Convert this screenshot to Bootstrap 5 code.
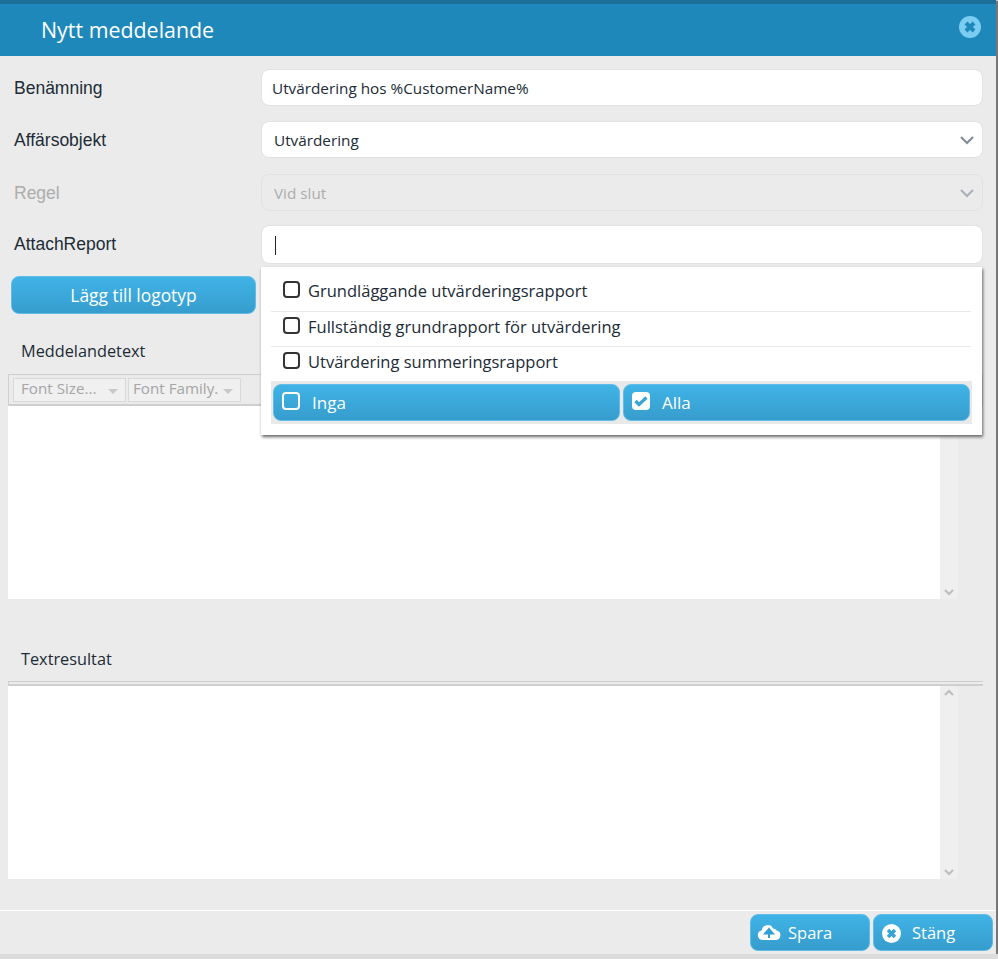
<!DOCTYPE html>
<html lang="sv">

<head>
  <meta charset="UTF-8" />
  <title>Nytt meddelande</title>
  <meta name="viewport" content="width=device-width, initial-scale=1" />
  <link href="https://cdn.jsdelivr.net/npm/bootstrap@5.3.0/dist/css/bootstrap.min.css" rel="stylesheet" />

  <style>
    body {
      background-color: #dcdcdc;
      font-family: "Open Sans", sans-serif;
      color: #212b36;
    }

    .dialog-window {
      width: 996px;
      height: 954px;
      background-color: #ebebeb;
      box-shadow: 2px 1px 1px #777;
    }

    .dialog-head {
      height: 56px;
      border-top: 4px solid #1c6f99;
      background-color: #1e88bb;
      padding: 0 15px 0 41px;
    }

    .dialog-title {
      font-family: "Open Sans", sans-serif;
      font-size: 21.4px;
      font-weight: 400;
      margin: 0;
      color: #fff;
    }

    .head-close {
      margin-bottom: 6px;
    }

    .form-area {
      height: 854px;
      padding: 13px 13px 0 0;
    }

    .form-line {
      margin-bottom: 15px;
    }

    .form-line label {
      width: 261px;
      padding-left: 14px;
      margin-top: 2px;
      font-family: "Liberation Sans", sans-serif;
      font-size: 17.5px;
    }

    .form-line .form-control,
    .form-line .form-select {
      height: 37px;
      border: 1px solid #e2e2e2;
      border-radius: 8px;
      font-size: 15.3px;
      color: #212b36;
      padding: 1px 10px 0 10px;
      box-shadow: none;
    }

    .form-line .form-select {
      padding: 2px 30px 0 12px;
      background-size: 16px 10px;
      background-position: right 7px center;
      background-image: url("data:image/svg+xml,%3csvg xmlns='http://www.w3.org/2000/svg' viewBox='0 0 16 10'%3e%3cpath fill='none' stroke='%23808a94' stroke-width='2' d='M2 2l6 6 6-6'/%3e%3c/svg%3e");
    }

    .form-line .form-select:disabled {
      background-color: #ebebeb;
      background-image: url("data:image/svg+xml,%3csvg xmlns='http://www.w3.org/2000/svg' viewBox='0 0 16 10'%3e%3cpath fill='none' stroke='%23a9b0b7' stroke-width='2' d='M2 2l6 6 6-6'/%3e%3c/svg%3e");
      color: #adadad;
      opacity: 1;
    }

    .form-line.is-disabled label {
      color: #adadad;
    }

    .form-line.line-wide {
      margin-bottom: 16px;
    }

    .form-line.line-rule {
      margin-bottom: 14px;
    }

    .form-line.line-attach {
      margin-bottom: 12px;
    }

    .form-line.line-attach label {
      margin-top: 0;
      margin-bottom: 1px;
    }

    .form-line .attach-field {
      height: 39px;
      padding-top: 10px;
    }

    .text-caret {
      display: block;
      width: 1px;
      height: 19px;
      background-color: #222;
      margin-left: 3px;
    }

    .btn-sky {
      background: linear-gradient(#40b3e6, #369dcd);
      border: 1px solid #62bde6;
      border-radius: 8px;
      color: #fff;
      font-family: "Open Sans", sans-serif;
    }

    .btn-sky:hover {
      color: #fff;
    }

    .btn-logo {
      width: 245px;
      height: 38px;
      margin-left: 11px;
      padding: 0;
      font-size: 17.4px;
    }

    .section-name {
      margin: 0 0 0 21px;
      font-size: 16.3px;
      line-height: 22px;
    }

    .name-first {
      margin-top: 26px;
    }

    .name-second {
      margin-top: 49px;
    }

    .editor-box {
      margin-left: 8px;
    }

    .editor-tools {
      height: 32px;
      margin-top: 12px;
      border: 1px solid #cfcfcf;
      border-bottom-width: 2px;
      padding: 3px 4px;
      gap: 2px;
      background-color: #ebebeb;
    }

    .tools-empty {
      height: 5px;
      padding: 0;
      margin-top: 11px;
      border-width: 1px 0 2px 1px;
    }

    .tool-pick {
      width: 113px;
      height: 24px;
      border: 1px solid #d9d9d9;
      background-color: #f0f0f0;
      color: #a5a5a5;
      font-size: 15.2px;
      line-height: 18px;
      padding-left: 7px;
      white-space: nowrap;
    }

    .tool-pick + .tool-pick {
      padding-left: 4px;
    }

    .tool-pick::after {
      content: "";
      position: absolute;
      right: 7px;
      top: 10px;
      border: 5px solid transparent;
      border-top: 5px solid #c8c8c8;
    }

    .editor-body {
      width: 950px;
      height: 193px;
      background-color: #fff;
    }

    .editor-bar {
      width: 18px;
      height: 100%;
      margin-left: auto;
      background-color: #efefef;
      padding: 3px 0;
    }

    .dialog-foot {
      height: 44px;
      border-top: 1px solid #fff;
      padding: 3px 3px 0 0;
      gap: 3px;
    }

    .btn-foot {
      width: 120px;
      height: 37px;
      padding: 2px 0 0 6px;
      gap: 7px;
      font-size: 16.5px;
    }

    .btn-foot.foot-close {
      padding-left: 8px;
      gap: 11px;
    }

    .foot-cloud {
      margin-bottom: 4px;
    }

    .report-menu {
      position: absolute;
      left: 261px;
      top: 267px;
      width: 721px;
      height: 168px;
      padding: 8px 10px 0;
      background-color: #fff;
      box-shadow: 1px 2px 3px #666;
      z-index: 5;
    }

    .report-item {
      height: 35px;
      border-bottom: 1px solid #e9e9e9;
      padding: 0 0 3px 12px;
      gap: 8px;
      font-size: 16.5px;
      color: #212b36;
      margin-right: 1px;
    }

    .report-item:first-child {
      height: 37px;
    }

    .report-item:nth-child(3) {
      height: 34px;
      border-bottom: 0;
    }

    .report-item .form-check-input,
    .menu-actions .form-check-input {
      width: 17px;
      height: 17px;
      margin: 0 0 4px;
      border: 2px solid #333;
      border-radius: 4px;
      flex-shrink: 0;
    }

    .menu-actions {
      height: 43px;
      padding: 3px 2px 0;
      gap: 3px;
      background-color: #e9e9e9;
    }

    .menu-actions .btn-sky {
      flex: 1 1 0;
      height: 37px;
      padding: 0 0 0 8px;
      gap: 12px;
      font-size: 17px;
    }

    .menu-actions .form-check-input {
      width: 18px;
      height: 18px;
      border-color: #fff;
      background-color: transparent;
    }

    .menu-actions .form-check-input:checked {
      border: 0;
      background-color: #fff;
      background-size: 18px 18px;
      background-image: url("data:image/svg+xml,%3csvg xmlns='http://www.w3.org/2000/svg' viewBox='0 0 18 18'%3e%3cpath fill='none' stroke='%2339a5d8' stroke-width='3.4' d='M3.5 9l3.5 3.5 7.5-7'/%3e%3c/svg%3e");
    }
  </style>
</head>

<body class="m-0">

  <div class="dialog-window position-relative">
    <header class="dialog-head d-flex align-items-center justify-content-between">
      <h1 class="dialog-title">Nytt meddelande</h1>
      <svg class="head-close" width="22" height="22" viewBox="0 0 22 22">
        <circle cx="11" cy="11" r="11" fill="#7accf0" />
        <path d="M7 7l8 8M15 7l-8 8" stroke="#1e88bb" stroke-width="4" />
      </svg>
    </header>

    <main class="form-area">
      <div class="form-line d-flex align-items-center">
        <label>Benämning</label>
        <input class="form-control flex-grow-1 w-auto" value="Utvärdering hos %CustomerName%" />
      </div>
      <div class="form-line line-wide d-flex align-items-center">
        <label>Affärsobjekt</label>
        <select class="form-select flex-grow-1 w-auto">
          <option>Utvärdering</option>
        </select>
      </div>
      <div class="form-line line-rule is-disabled d-flex align-items-center">
        <label>Regel</label>
        <select class="form-select flex-grow-1 w-auto" disabled>
          <option>Vid slut</option>
        </select>
      </div>
      <div class="form-line line-attach d-flex align-items-center">
        <label>AttachReport</label>
        <div class="form-control attach-field flex-grow-1 w-auto"><span class="text-caret"></span></div>
      </div>

      <button class="btn btn-sky btn-logo d-block" type="button">Lägg till logotyp</button>

      <p class="section-name name-first">Meddelandetext</p>
      <div class="editor-box">
        <div class="editor-tools d-flex">
          <div class="tool-pick position-relative">Font Size...</div>
          <div class="tool-pick position-relative">Font Family.</div>
        </div>
        <div class="editor-body">
          <div class="editor-bar d-flex flex-column align-items-center justify-content-between">
            <svg width="10" height="7" viewBox="0 0 10 7">
              <path d="M1 6l4-4 4 4" fill="none" stroke="#bdbdbd" stroke-width="2" />
            </svg>
            <svg width="10" height="7" viewBox="0 0 10 7">
              <path d="M1 1l4 4 4-4" fill="none" stroke="#bdbdbd" stroke-width="2" />
            </svg>
          </div>
        </div>
      </div>

      <p class="section-name name-second">Textresultat</p>
      <div class="editor-box">
        <div class="editor-tools tools-empty"></div>
        <div class="editor-body">
          <div class="editor-bar d-flex flex-column align-items-center justify-content-between">
            <svg width="10" height="7" viewBox="0 0 10 7">
              <path d="M1 6l4-4 4 4" fill="none" stroke="#bdbdbd" stroke-width="2" />
            </svg>
            <svg width="10" height="7" viewBox="0 0 10 7">
              <path d="M1 1l4 4 4-4" fill="none" stroke="#bdbdbd" stroke-width="2" />
            </svg>
          </div>
        </div>
      </div>
    </main>

    <footer class="dialog-foot d-flex justify-content-end">
      <button class="btn btn-sky btn-foot d-flex align-items-center" type="button">
        <svg class="foot-cloud" width="24" height="18" viewBox="0 0 24 18">
          <path d="M5.5 17a4.8 4.8 0 0 1-.8-9.5 6 6 0 0 1 11.4-2 5 5 0 0 1 3.7 1.9 4.9 4.9 0 0 1-.8 9.6z" fill="#fff" />
          <path d="M12 15V9M8.2 10.4L12 6l3.8 4.4z" fill="#2f9fd4" stroke="#2f9fd4" stroke-width="2" />
        </svg>
        Spara
      </button>
      <button class="btn btn-sky btn-foot foot-close d-flex align-items-center" type="button">
        <svg width="19" height="19" viewBox="0 0 22 22">
          <circle cx="11" cy="11" r="11" fill="#fff" />
          <path d="M7 7l8 8M15 7l-8 8" stroke="#38a3d6" stroke-width="4" />
        </svg>
        Stäng
      </button>
    </footer>

    <div class="report-menu">
      <div class="list-group list-group-flush">
        <label class="report-item d-flex align-items-center">
          <input class="form-check-input" type="checkbox" />Grundläggande utvärderingsrapport
        </label>
        <label class="report-item d-flex align-items-center">
          <input class="form-check-input" type="checkbox" />Fullständig grundrapport för utvärdering
        </label>
        <label class="report-item d-flex align-items-center">
          <input class="form-check-input" type="checkbox" />Utvärdering summeringsrapport
        </label>
      </div>
      <div class="menu-actions d-flex">
        <button class="btn btn-sky d-flex align-items-center" type="button">
          <input class="form-check-input" type="checkbox" />Inga
        </button>
        <button class="btn btn-sky d-flex align-items-center" type="button">
          <input class="form-check-input" type="checkbox" checked />Alla
        </button>
      </div>
    </div>
  </div>

  <script src="https://cdn.jsdelivr.net/npm/bootstrap@5.3.0/dist/js/bootstrap.bundle.min.js"></script>
</body>

</html>
